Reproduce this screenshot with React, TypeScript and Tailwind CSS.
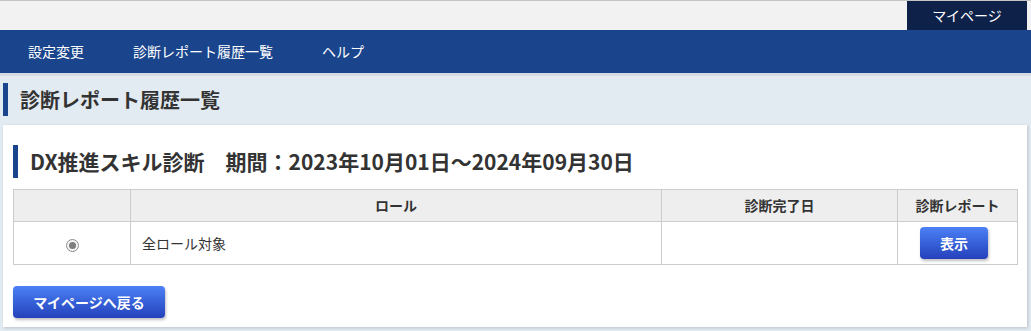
import React from "react";

const font = { fontFamily: '"Noto Sans CJK JP", "Noto Sans", sans-serif' };

const navItems = ["設定変更", "診断レポート履歴一覧", "ヘルプ"];

const BlueButton: React.FC<{ children: React.ReactNode; className?: string }> = ({
  children,
  className = "",
}) => (
  <button
    className={`h-[32px] rounded-[4px] bg-gradient-to-b from-[#4c80f6] to-[#2541bb] text-[14px] font-bold text-white shadow-[1px_2px_3px_rgba(0,0,0,0.25)] ${className}`}
  >
    {children}
  </button>
);

export default function App() {
  return (
    <div className="min-h-[331px] bg-[#e2eaf2] text-[#333]" style={font}>
      <div className="flex h-[30px] justify-end border-t border-[#c4c4c4] bg-[#f2f2f2] pr-[4px]">
        <div className="flex w-[120px] items-center justify-center bg-[#0d2149] text-[14px] text-white">
          マイページ
        </div>
      </div>

      <nav className="flex h-[43px] items-center bg-[#1a458c] pl-[28px] text-[14px] text-white">
        {navItems.map((item, i) => (
          <span key={item} className={i === 0 ? "mr-[49px]" : i === 1 ? "mr-[49px]" : ""}>
            {item}
          </span>
        ))}
      </nav>
      <div className="h-[3px] bg-[#d4dbe3]" />

      <div className="px-[3px]">
        <div className="flex h-[33px] items-center mt-[7px]">
          <div className="h-full w-[5px] bg-[#1a458c]" />
          <h1 className="ml-[12px] text-[20px] font-bold">診断レポート履歴一覧</h1>
        </div>

        <div className="mt-[9px] mr-[1px] bg-white px-[10px] pt-[20px] pb-[9px] shadow-[1px_1px_3px_rgba(0,0,0,0.18)]">
          <div className="flex h-[33px] items-center">
            <div className="h-full w-[5px] bg-[#1a458c]" />
            <h2 className="ml-[12px] text-[21px] font-bold whitespace-nowrap">
              DX推進スキル診断　期間：2023年10月01日～2024年09月30日
            </h2>
          </div>

          <table className="mt-[11px] w-[1004px] table-fixed border-collapse text-[14px]">
            <colgroup>
              <col className="w-[117px]" />
              <col className="w-[531px]" />
              <col className="w-[236px]" />
              <col className="w-[120px]" />
            </colgroup>
            <thead>
              <tr className="h-[32px] bg-[#eeeeee]">
                <th className="border border-[#cccccc] font-normal"></th>
                <th className="border border-[#cccccc] font-bold">ロール</th>
                <th className="border border-[#cccccc] font-bold">診断完了日</th>
                <th className="border border-[#cccccc] font-bold">診断レポート</th>
              </tr>
            </thead>
            <tbody>
              <tr className="h-[43px]">
                <td className="border border-[#cccccc]">
                  <div className="flex justify-center pt-[4px]">
                    <span className="flex h-[13px] w-[13px] items-center justify-center rounded-full border border-[#8c8c8c] bg-[#f4f4f4]">
                      <span className="h-[7px] w-[7px] rounded-full bg-[#7d7d7d]" />
                    </span>
                  </div>
                </td>
                <td className="border border-[#cccccc] pl-[11px]">全ロール対象</td>
                <td className="border border-[#cccccc]"></td>
                <td className="border border-[#cccccc] pl-[22px]">
                  <BlueButton className="w-[68px]">表示</BlueButton>
                </td>
              </tr>
            </tbody>
          </table>

          <BlueButton className="mt-[21px] w-[152px]">マイページへ戻る</BlueButton>
        </div>
      </div>
    </div>
  );
}
